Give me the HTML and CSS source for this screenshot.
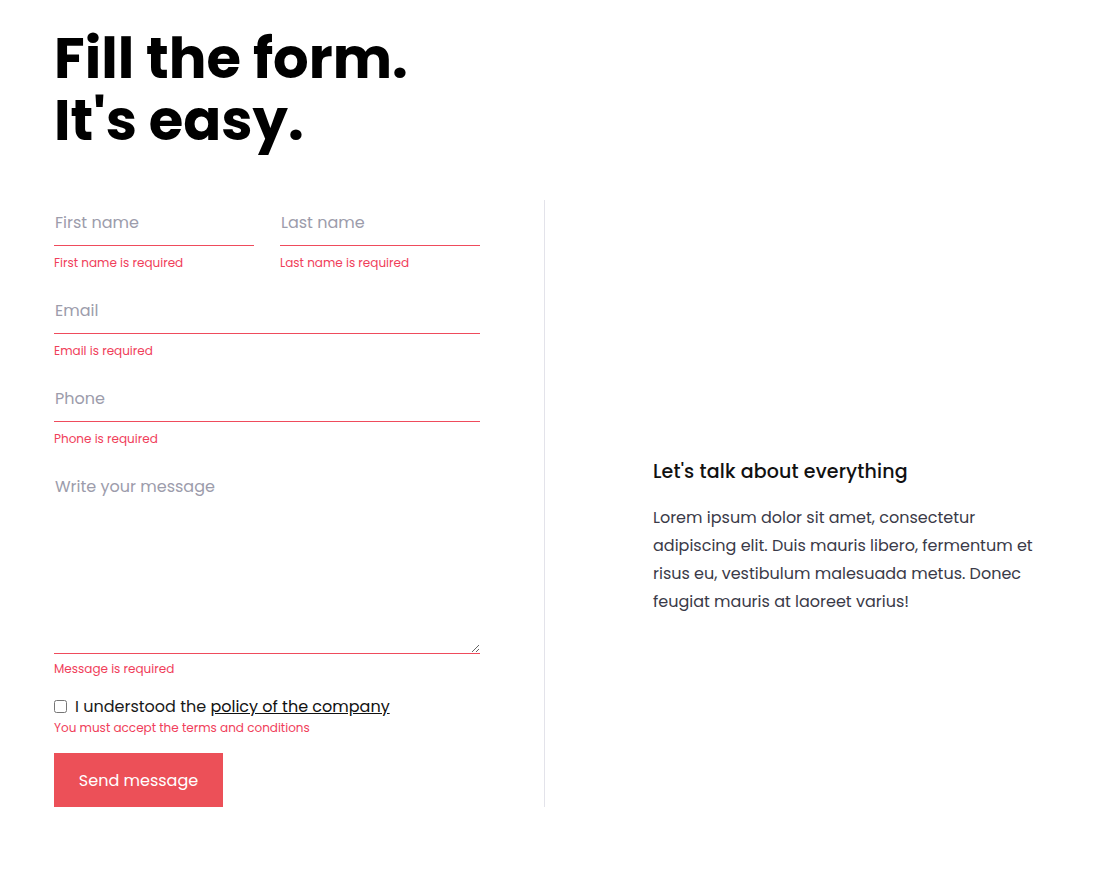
FILE: index.html
```html
<!DOCTYPE html>
<html lang="en">
<head>
<meta charset="utf-8">
<title>Contact</title>
<link rel="stylesheet" href="styles.css">
</head>
<body>
<main class="page">
  <h1 class="title">Fill the form.<br>It's easy.</h1>
  <div class="layout">
    <form class="form-col" novalidate>
      <div class="row">
        <div class="field">
          <input class="input" type="text" placeholder="First name">
          <div class="error">First name is required</div>
        </div>
        <div class="field">
          <input class="input" type="text" placeholder="Last name">
          <div class="error">Last name is required</div>
        </div>
      </div>
      <div class="field">
        <input class="input" type="email" placeholder="Email">
        <div class="error">Email is required</div>
      </div>
      <div class="field">
        <input class="input" type="tel" placeholder="Phone">
        <div class="error">Phone is required</div>
      </div>
      <div class="field field-msg">
        <textarea class="input textarea" placeholder="Write your message"></textarea>
        <div class="error error-msg">Message is required</div>
      </div>
      <label class="check">
        <input type="checkbox" class="checkbox">
        <span>I understood the <a href="#" class="link">policy of the company</a></span>
      </label>
      <div class="error error-check">You must accept the terms and conditions</div>
      <button type="button" class="btn">Send message</button>
    </form>
    <section class="info">
      <h2 class="info-title">Let's talk about everything</h2>
      <p class="info-text">Lorem ipsum dolor sit amet, consectetur adipiscing elit. Duis mauris libero, fermentum et risus eu, vestibulum malesuada metus. Donec feugiat mauris at laoreet varius!</p>
    </section>
  </div>
</main>
</body>
</html>
```

FILE: styles.css
```css
* { box-sizing: border-box; }
body {
  margin: 0;
  background: #fff;
  font-family: "Poppins", Inter, "Open Sans", sans-serif;
  color: #111;
}
.page {
  padding: 28px 54px 60px;
}
.title {
  margin: 0 0 48px;
  font-size: 56px;
  line-height: 62px;
  font-weight: 700;
  color: #000;
}
.layout {
  display: flex;
}
.form-col {
  width: 491px;
  padding-right: 64px;
  border-right: 1px solid #e3e3ea;
  display: flex;
  flex-direction: column;
}
.row {
  display: flex;
  gap: 26px;
}
.row .field { width: 200px; }
.field {
  display: flex;
  flex-direction: column;
  margin-bottom: 16px;
}
.input {
  height: 46px;
  width: 100%;
  border: none;
  border-bottom: 1px solid #ef4b5c;
  padding: 0 1px;
  font-family: inherit;
  font-size: 16px;
  color: #333;
  outline: none;
  background: transparent;
}
.input::placeholder { color: #9c9cab; }
.textarea {
  height: 190px;
  padding-top: 10px;
  resize: vertical;
}
.error {
  margin-top: 8px;
  font-size: 12px;
  line-height: 18px;
  color: #f03e5a;
}
.error-msg { margin-top: 6px; }
.field-msg { margin-bottom: 15px; }
.check {
  display: flex;
  align-items: center;
  gap: 8px;
  font-size: 16px;
  line-height: 24px;
  color: #1a1a1a;
}
.checkbox {
  margin: 0;
  width: 13px;
  height: 13px;
}
.check span { padding-top: 2px; }
.link { color: #111; text-decoration: underline; }
.error-check { margin-top: 0; }
.btn {
  margin-top: 16px;
  width: 169px;
  height: 54px;
  border: none;
  background: #ec5058;
  color: #fff;
  font-family: inherit;
  font-size: 16px;
  cursor: pointer;
}
.info {
  padding: 259px 0 0 108px;
  width: 520px;
}
.info-title {
  margin: 0 0 19px;
  font-size: 19px;
  line-height: 26px;
  font-weight: 500;
  letter-spacing: 0.15px;
  color: #111;
}
.info-text {
  margin: 0;
  font-size: 16px;
  line-height: 28px;
  color: #3a3a48;
}
```
